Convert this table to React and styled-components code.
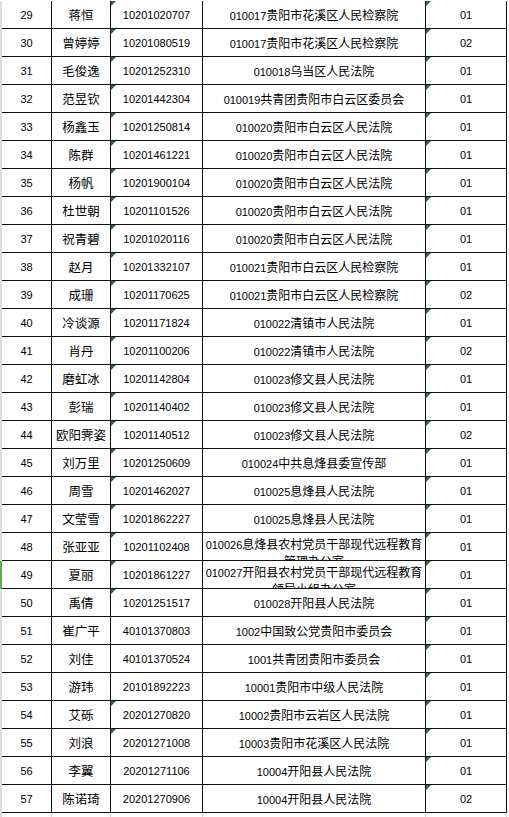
import React from "react";
import styled, { createGlobalStyle } from "styled-components";

const GlobalStyle = createGlobalStyle`
  html, body {
    margin: 0;
    padding: 0;
    background: #fff;
  }
  body {
    font-family: "Noto Sans CJK SC", "Liberation Sans", sans-serif;
    color: #000;
  }
`;

const Sheet = styled.div`
  width: 509px;
  padding-top: 1px;
`;

const Row = styled.div`
  display: grid;
  grid-template-columns: 50px 59px 92px 223px 81px;
  height: 28px;
  box-sizing: border-box;
  border-left: 2px solid ${(p) => (p.$marked ? "#62ad45" : "#dedede")};
`;

const Cell = styled.div`
  position: relative;
  box-sizing: border-box;
  border-right: 1px solid #111;
  border-bottom: 1px solid #111;
  display: flex;
  justify-content: center;
  align-items: ${(p) => (p.$wrap ? "flex-start" : "center")};
  text-align: center;
  overflow: hidden;
  padding: ${(p) => (p.$wrap ? "3px 0 0" : "0 4px")};
  font-size: 12px;
  line-height: ${(p) => (p.$wrap ? "15px" : "normal")};
  white-space: ${(p) => (p.$wrap ? "normal" : "nowrap")};
`;

const NameCell = styled(Cell)`
  font-size: 12.5px;
`;

const Num = styled.span`
  font-family: "Liberation Sans", sans-serif;
  font-size: 11px;
`;

const Flag = styled.span`
  position: absolute;
  top: 0;
  left: 0;
  width: 0;
  height: 0;
  border-top: 5px solid #2c6b37;
  border-right: 5px solid transparent;
`;

const Tail = styled.div`
  display: grid;
  grid-template-columns: 50px 59px 92px 223px 81px;
  height: 5px;
  border-left: 2px solid #dedede;
  div {
    border-right: 1px solid #d6d6d6;
  }
`;

const rows = [
  [29, "蒋恒", "10201020707", "010017", "贵阳市花溪区人民检察院", "01"],
  [30, "曾婷婷", "10201080519", "010017", "贵阳市花溪区人民检察院", "02"],
  [31, "毛俊逸", "10201252310", "010018", "乌当区人民法院", "01"],
  [32, "范昱钦", "10201442304", "010019", "共青团贵阳市白云区委员会", "01"],
  [33, "杨鑫玉", "10201250814", "010020", "贵阳市白云区人民法院", "01"],
  [34, "陈群", "10201461221", "010020", "贵阳市白云区人民法院", "01"],
  [35, "杨帆", "10201900104", "010020", "贵阳市白云区人民法院", "01"],
  [36, "杜世朝", "10201101526", "010020", "贵阳市白云区人民法院", "01"],
  [37, "祝青碧", "10201020116", "010020", "贵阳市白云区人民法院", "01"],
  [38, "赵月", "10201332107", "010021", "贵阳市白云区人民检察院", "01"],
  [39, "成珊", "10201170625", "010021", "贵阳市白云区人民检察院", "02"],
  [40, "冷谈源", "10201171824", "010022", "清镇市人民法院", "01"],
  [41, "肖丹", "10201100206", "010022", "清镇市人民法院", "02"],
  [42, "磨虹冰", "10201142804", "010023", "修文县人民法院", "01"],
  [43, "彭瑞", "10201140402", "010023", "修文县人民法院", "01"],
  [44, "欧阳霁姿", "10201140512", "010023", "修文县人民法院", "02"],
  [45, "刘万里", "10201250609", "010024", "中共息烽县委宣传部", "01"],
  [46, "周雪", "10201462027", "010025", "息烽县人民法院", "01"],
  [47, "文莹雪", "10201862227", "010025", "息烽县人民法院", "01"],
  [48, "张亚亚", "10201102408", "010026", "息烽县农村党员干部现代远程教育管理办公室", "01"],
  [49, "夏丽", "10201861227", "010027", "开阳县农村党员干部现代远程教育领导小组办公室", "01"],
  [50, "禹倩", "10201251517", "010028", "开阳县人民法院", "01"],
  [51, "崔广平", "40101370803", "1002", "中国致公党贵阳市委员会", "01"],
  [52, "刘佳", "40101370524", "1001", "共青团贵阳市委员会", "01"],
  [53, "游玮", "20101892223", "10001", "贵阳市中级人民法院", "01"],
  [54, "艾砾", "20201270820", "10002", "贵阳市云岩区人民法院", "01"],
  [55, "刘浪", "20201271008", "10003", "贵阳市花溪区人民法院", "01"],
  [56, "李翼", "20201271106", "10004", "开阳县人民法院", "01"],
  [57, "陈诺琦", "20201270906", "10004", "开阳县人民法院", "02"],
];

// ids typed as text show the little green marker
const flaggedId = (no) => no <= 50 || no === 54 || no === 55;

const App = () => {
  return (
    <>
      <GlobalStyle />
      <Sheet>
        {rows.map(([no, name, id, code, unit, post]) => {
          const long = unit.length > 16;
          return (
            <Row key={no} $marked={no === 49}>
              <Cell>
                <Num>{no}</Num>
              </Cell>
              <NameCell>{name}</NameCell>
              <Cell>
                {flaggedId(no) && <Flag />}
                <Num>{id}</Num>
              </Cell>
              <Cell $wrap={long}>
                <span>
                  <Num>{code}</Num>
                  {unit}
                </span>
              </Cell>
              <Cell>
                <Flag />
                <Num>{post}</Num>
              </Cell>
            </Row>
          );
        })}
        <Tail>
          <div />
          <div />
          <div />
          <div />
          <div />
        </Tail>
      </Sheet>
    </>
  );
};

export default App;
